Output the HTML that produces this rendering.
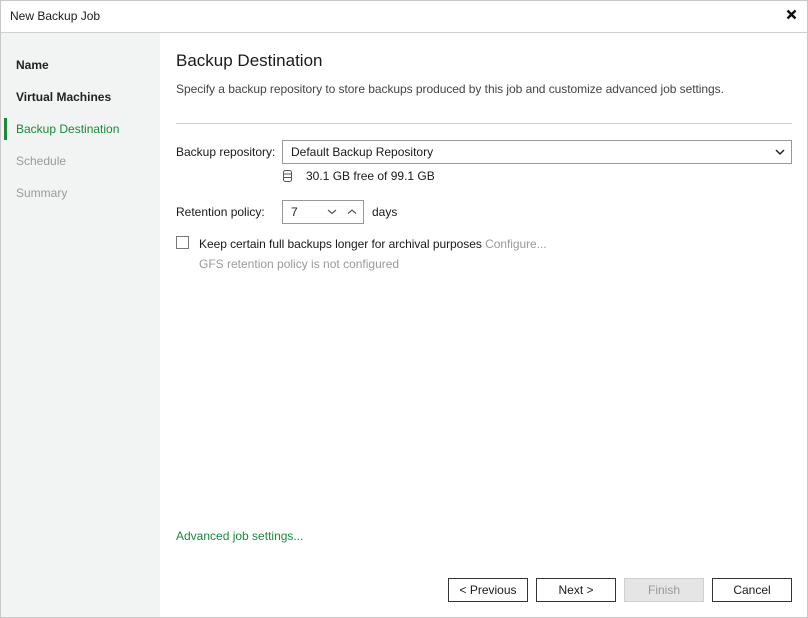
<!DOCTYPE html>
<html><head><meta charset="utf-8"><style>
*{margin:0;padding:0;box-sizing:border-box}
body{width:808px;height:618px;overflow:hidden;background:#fff;font-family:"Liberation Sans",sans-serif;font-size:12px;color:#1a1a1a;position:relative}
.a{position:absolute;white-space:nowrap}
.frame{position:absolute;left:0;top:0;width:808px;height:618px;border:1px solid #c8c8c8}
.btn{position:absolute;top:578px;height:24px;border:1px solid #333;background:#fff;text-align:center;line-height:22px;font-size:12px}
</style></head><body>
<div class="frame"></div>
<div class="a" style="left:1px;top:32px;width:806px;height:1px;background:#d0d0d0"></div>
<div class="a" style="left:10px;top:9px;font-size:12px">New Backup Job</div>
<svg class="a" style="left:786px;top:9px" width="11" height="11"><path d="M1.5 1.5l8 8M9.5 1.5l-8 8" stroke="#111" stroke-width="2.4"/></svg>
<div class="a" style="left:1px;top:33px;width:159px;height:584px;background:#f2f3f3"></div>
<div class="a" style="left:16px;top:58px;font-weight:bold;color:#222">Name</div>
<div class="a" style="left:16px;top:90px;font-weight:bold;color:#222">Virtual Machines</div>
<div class="a" style="left:4px;top:118px;width:3px;height:22px;background:#1a8a3a"></div>
<div class="a" style="left:16px;top:122px;color:#1a8a3a">Backup Destination</div>
<div class="a" style="left:16px;top:154px;color:#9a9a9a">Schedule</div>
<div class="a" style="left:16px;top:186px;color:#9a9a9a">Summary</div>
<div class="a" style="left:176px;top:51px;font-size:17px">Backup Destination</div>
<div class="a" style="left:176px;top:82px;color:#444;letter-spacing:-0.05px">Specify a backup repository to store backups produced by this job and customize advanced job settings.</div>
<div class="a" style="left:176px;top:123px;width:616px;height:1px;background:#cfcfcf"></div>
<div class="a" style="left:176px;top:145px">Backup repository:</div>
<div class="a" style="left:282px;top:140px;width:510px;height:24px;border:1px solid #999"></div>
<div class="a" style="left:291px;top:145px">Default Backup Repository</div>
<svg class="a" style="left:775px;top:148px" width="10" height="8"><path d="M1 2l4 4 4-4" stroke="#222" stroke-width="1.5" fill="none"/></svg>
<svg class="a" style="left:282px;top:169px" width="12" height="14"><g stroke="#555" fill="none"><rect x="1.5" y="1.5" width="8" height="11" rx="2"/><path d="M1.5 5h8M1.5 8.5h8"/></g></svg>
<div class="a" style="left:306px;top:169px">30.1 GB free of 99.1 GB</div>
<div class="a" style="left:176px;top:205px">Retention policy:</div>
<div class="a" style="left:282px;top:200px;width:82px;height:24px;border:1px solid #999"></div>
<div class="a" style="left:291px;top:205px">7</div>
<svg class="a" style="left:327px;top:208px" width="30" height="8"><path d="M1 2l4 3.5 4-3.5M21 5.5l4-3.5 4 3.5" stroke="#555" stroke-width="1.2" fill="none"/></svg>
<div class="a" style="left:372px;top:205px">days</div>
<div class="a" style="left:176px;top:236px;width:13px;height:13px;border:1px solid #777"></div>
<div class="a" style="left:199px;top:237px;letter-spacing:-0.05px">Keep certain full backups longer for archival purposes <span style="color:#9a9a9a">Configure...</span></div>
<div class="a" style="left:199px;top:257px;color:#9a9a9a">GFS retention policy is not configured</div>
<div class="a" style="left:176px;top:529px;color:#1a8a3a">Advanced job settings...</div>
<div class="btn" style="left:448px;width:80px">&lt; Previous</div>
<div class="btn" style="left:536px;width:80px">Next &gt;</div>
<div class="btn" style="left:624px;width:80px;background:#e5e5e5;border-color:#d0d0d0;color:#999">Finish</div>
<div class="btn" style="left:712px;width:80px">Cancel</div>
</body></html>
